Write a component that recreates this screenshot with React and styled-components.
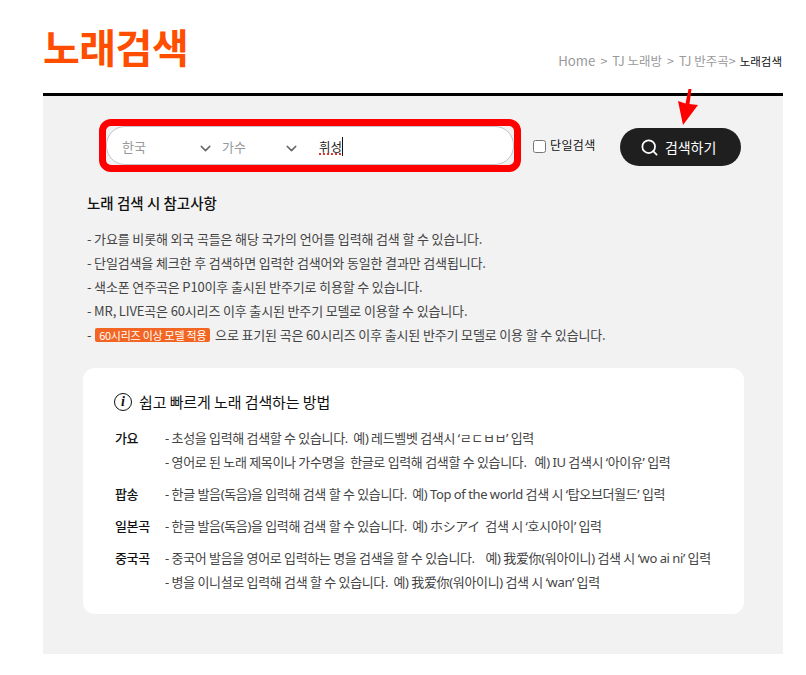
import React from "react";
import styled, { createGlobalStyle } from "styled-components";
import { ChevronDown, Search } from "lucide-react";

const FONT = `"Noto Sans CJK KR", "Noto Sans", sans-serif`;

const GlobalStyle = createGlobalStyle`
  html, body {
    margin: 0;
    padding: 0;
    background: #fff;
    font-family: ${FONT};
  }
`;

const notes = [
  "- 가요를 비롯해 외국 곡들은 해당 국가의 언어를 입력해 검색 할 수 있습니다.",
  "- 단일검색을 체크한 후 검색하면 입력한 검색어와 동일한 결과만 검색됩니다.",
  "- 색소폰 연주곡은 P10이후 출시된 반주기로 히용할 수 있습니다.",
  "- MR, LIVE곡은 60시리즈 이후 출시된 반주기 모델로 이용할 수 있습니다.",
];

const tips = [
  {
    label: "가요",
    lines: [
      "- 초성을 입력해 검색할 수 있습니다.  예) 레드벨벳 검색시 ‘ㄹㄷㅂㅂ’ 입력",
      "- 영어로 된 노래 제목이나 가수명을  한글로 입력해 검색할 수 있습니다.   예) IU 검색시 ‘아이유’ 입력",
    ],
  },
  {
    label: "팝송",
    lines: ["- 한글 발음(독음)을 입력해 검색 할 수 있습니다.  예) Top of the world 검색 시 ‘탑오브더월드’ 입력"],
  },
  {
    label: "일본곡",
    lines: ["- 한글 발음(독음)을 입력해 검색 할 수 있습니다.  예) ホシアイ  검색 시 ‘호시아이’ 입력"],
  },
  {
    label: "중국곡",
    lines: [
      "- 중국어 발음을 영어로 입력하는 명을 검색을 할 수 있습니다.    예) 我爱你(워아이니) 검색 시 ‘wo ai ni’ 입력",
      "- 병을 이니셜로 입력해 검색 할 수 있습니다.  예) 我爱你(워아이니) 검색 시 ‘wan’ 입력",
    ],
  },
];

const App = () => {
  return (
    <Page>
      <GlobalStyle />
      <Header>
        <Title>노래검색</Title>
        <Crumbs>
          <CrumbHome>Home</CrumbHome>
          <Sep>&gt;</Sep>
          <span>TJ 노래방</span>
          <Sep>&gt;</Sep>
          <span>TJ 반주곡&gt;</span>
          <CrumbNow>노래검색</CrumbNow>
        </Crumbs>
      </Header>
      <Panel>
        <SearchRow>
          <Highlight>
            <SearchBox>
              <Select>
                한국
                <Chevron />
              </Select>
              <SelectNarrow>
                가수
                <Chevron />
              </SelectNarrow>
              <Query>
                <Typed>휘성</Typed>
              </Query>
            </SearchBox>
          </Highlight>
          <Check>
            <input type="checkbox" />
            <span>단일검색</span>
          </Check>
          <SearchButton>
            <Search size={19} strokeWidth={2.2} color="#fff" />
            검색하기
          </SearchButton>
          <Arrow width="24" height="38" viewBox="0 0 24 38">
            <path d="M12.5 0 L15.5 0 L13.5 15 L22 16 L7 36 L2 12 L9.5 14.5 Z" fill="#ff0000" />
          </Arrow>
        </SearchRow>

        <NoteTitle>노래 검색 시 참고사항</NoteTitle>
        <NoteList>
          {notes.map((n) => (
            <li key={n}>{n}</li>
          ))}
          <li>
            - <Badge>60시리즈 이상 모델 적용</Badge> 으로 표기된 곡은 60시리즈 이후 출시된 반주기 모델로 이용 할 수 있습니다.
          </li>
        </NoteList>

        <Card>
          <CardTitle>
            <InfoIcon>i</InfoIcon>
            쉽고 빠르게 노래 검색하는 방법
          </CardTitle>
          {tips.map((t) => (
            <TipRow key={t.label}>
              <TipLabel>{t.label}</TipLabel>
              <div>
                {t.lines.map((l) => (
                  <TipLine key={l}>{l}</TipLine>
                ))}
              </div>
            </TipRow>
          ))}
        </Card>
      </Panel>
    </Page>
  );
};

export default App;

const Page = styled.div`
  width: 740px;
  margin-left: 43px;
  padding-bottom: 21px;
`;
const Header = styled.div`
  height: 93px;
  display: flex;
  justify-content: space-between;
  align-items: flex-end;
  border-bottom: 3px solid #000;
`;
const Title = styled.h1`
  margin: 0 0 22px;
  font-size: 40px;
  line-height: 50px;
  font-weight: 700;
  letter-spacing: -0.5px;
  color: #ff4e00;
`;
const Crumbs = styled.div`
  display: flex;
  align-items: center;
  margin: 0 1px 24px 0;
  font-size: 12.5px;
  line-height: 16px;
  color: #9a9a9a;
`;
const CrumbHome = styled.span`
  font-size: 13.2px;
`;
const Sep = styled.span`
  margin: 0 5px;
`;
const CrumbNow = styled.span`
  margin-left: 4px;
  font-size: 11.5px;
  color: #111;
`;
const Panel = styled.div`
  height: 558px;
  box-sizing: border-box;
  padding: 23px 39px 0 40px;
  background: #f2f2f2;
`;
const SearchRow = styled.div`
  position: relative;
  display: flex;
  align-items: center;
  margin-left: 16px;
`;
const Highlight = styled.div`
  width: 422px;
  height: 53px;
  box-sizing: border-box;
  border: 7px solid #ff0000;
  border-radius: 12px;
`;
const SearchBox = styled.div`
  height: 100%;
  display: flex;
  align-items: center;
  box-sizing: border-box;
  padding: 1px 0 0 15px;
  background: #fff;
  border: 1px solid #c4c4c4;
  border-radius: 19px;
  font-size: 13px;
`;
const Select = styled.div`
  width: 100px;
  box-sizing: border-box;
  padding-right: 8px;
  display: flex;
  align-items: center;
  justify-content: space-between;
  color: #999;
`;
const SelectNarrow = styled(Select)`
  width: 87px;
  padding-right: 9px;
  margin-right: 10px;
`;
const Chevron = styled(ChevronDown).attrs({ size: 17, strokeWidth: 2, color: "#666" })`
  margin-top: 4px;
`;
const Query = styled.div`
  flex: 1;
  color: #222;
  font-size: 12.5px;
`;
const Typed = styled.span`
  border-right: 1px solid #111;
  text-decoration: underline dotted #e53333 2px;
  text-decoration-skip-ink: none;
  text-underline-offset: 2px;
`;
const Check = styled.label`
  display: flex;
  align-items: center;
  margin-left: 12px;
  font-size: 12px;
  letter-spacing: 0.03em;
  color: #111;

  input {
    width: 13px;
    height: 13px;
    margin: 1px 4px 0 0;
  }
  span {
    margin-top: -3px;
  }
`;
const SearchButton = styled.button`
  width: 121px;
  height: 38px;
  margin: 3px 0 0 24px;
  padding: 0 4px 0 0;
  display: flex;
  align-items: center;
  justify-content: center;
  gap: 6px;
  border: 0;
  border-radius: 19px;
  background: #1f1f1f;
  color: #fff;
  font-family: ${FONT};
  font-size: 14px;
  letter-spacing: -0.1px;
`;
const Arrow = styled.svg`
  position: absolute;
  left: 577px;
  top: -30px;
`;
const NoteTitle = styled.h2`
  margin: 21px 0 0 4px;
  font-size: 14.5px;
  line-height: 20px;
  font-weight: 500;
  color: #111;
`;
const NoteList = styled.ul`
  list-style: none;
  margin: 14px 0 0 4px;
  padding: 0;
  font-size: 13px;
  letter-spacing: -0.15px;
  line-height: 24px;
  color: #444;
`;
const Badge = styled.span`
  display: inline-block;
  padding: 0 4px;
  height: 14px;
  line-height: 14px;
  border-radius: 2px;
  background: #f26522;
  color: #fff;
  font-size: 11px;
  letter-spacing: -0.25px;
  margin: 0 2px 0 1px;
`;
const Card = styled.div`
  height: 246px;
  box-sizing: border-box;
  margin-top: 21px;
  padding: 23px 32px;
  background: #fff;
  border-radius: 12px;
`;
const CardTitle = styled.div`
  display: flex;
  align-items: center;
  gap: 7px;
  margin-bottom: 13px;
  font-size: 15px;
  letter-spacing: -0.1px;
  line-height: 22px;
  color: #111;
`;
const InfoIcon = styled.i`
  width: 18px;
  height: 18px;
  margin-left: -1px;
  box-sizing: border-box;
  display: flex;
  align-items: center;
  justify-content: center;
  border: 1.5px solid #111;
  border-radius: 50%;
  font-family: "Liberation Serif", serif;
  font-size: 14px;
  font-weight: 700;
`;
const TipRow = styled.div`
  display: grid;
  grid-template-columns: 50px 1fr;
  margin-bottom: 8px;
  font-size: 13px;
  letter-spacing: -0.35px;
  line-height: 24px;
`;
const TipLabel = styled.div`
  font-weight: 500;
  color: #111;
`;
const TipLine = styled.div`
  white-space: pre;
  word-spacing: -0.35px;
  font-family: "Noto Sans", "Noto Sans CJK KR", sans-serif;
  color: #444;
`;
